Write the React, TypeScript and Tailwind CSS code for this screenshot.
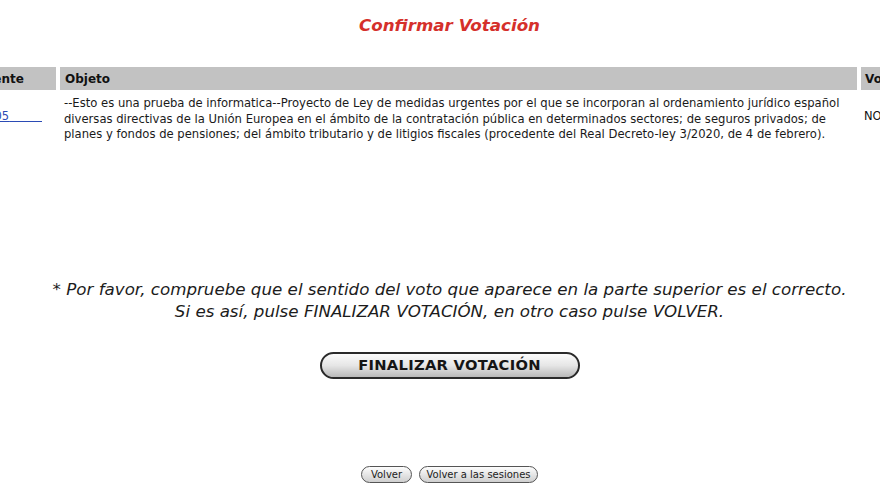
import React from "react"

const font = { fontFamily: '"DejaVu Sans", Verdana, sans-serif' }

export default function App() {
  return (
    <div
      className="w-[880px] h-[495px] overflow-hidden bg-white text-[#111] flex flex-col"
      style={font}
    >
      <h1 className="pt-[14px] pl-[19px] text-center text-[16.7px] leading-[22px] font-bold italic text-[#d5302b]">
        Confirmar Votación
      </h1>

      {/* tabla de la votación, recortada por los lados */}
      <div className="mt-[31px] -ml-[57px] flex gap-[4px]">
        <div className="w-[113px] shrink-0 flex flex-col">
          <div className="h-[23px] bg-[#c2c2c2] px-[5px] flex items-center text-[12px] font-bold whitespace-nowrap">
            Expediente
          </div>
          <div className="h-[54px] pr-[14px] flex items-center justify-end text-[11.5px]">
            <a href="#" className="text-[#2b4bb5] underline whitespace-pre">
              121/000005{"\u00a0\u00a0\u00a0\u00a0\u00a0\u00a0\u00a0\u00a0\u00a0"}
            </a>
          </div>
        </div>

        <div className="w-[797px] shrink-0 flex flex-col">
          <div className="h-[23px] bg-[#c2c2c2] px-[5px] flex items-center text-[12px] font-bold">
            Objeto
          </div>
          <div className="pt-[6px] px-[4px] text-[11.6px] leading-[15.5px] text-[#1a1a1a]">
            --Esto es una prueba de informatica--Proyecto de Ley de medidas urgentes por el que se incorporan al
            ordenamiento jurídico español diversas directivas de la Unión Europea en el ámbito de la contratación
            pública en determinados sectores; de seguros privados; de planes y fondos de pensiones; del ámbito
            tributario y de litigios fiscales (procedente del Real Decreto-ley 3/2020, de 4 de febrero).
          </div>
        </div>

        <div className="w-[80px] shrink-0 flex flex-col">
          <div className="h-[23px] bg-[#c2c2c2] px-[4px] flex items-center text-[12px] font-bold">
            Voto
          </div>
          <div className="h-[54px] px-[3px] flex items-center text-[11.5px]">NO</div>
        </div>
      </div>

      <div className="mt-[134px] pl-[19px] text-center text-[16.7px] leading-[22px] italic text-[#1c1c1c]">
        <p className="whitespace-nowrap">
          * Por favor, compruebe que el sentido del voto que aparece en la parte superior es el correcto.
        </p>
        <p>Si es así, pulse FINALIZAR VOTACIÓN, en otro caso pulse VOLVER.</p>
      </div>

      <div className="mt-[30px] pl-[19px] flex justify-center">
        <button className="w-[260px] h-[27px] rounded-full border-2 border-[#2a2a2a] bg-gradient-to-b from-[#fbfbfb] via-[#e6e6e6] to-[#b9b9b9] text-[14.7px] font-bold tracking-[0.3px] text-[#151515]">
          FINALIZAR VOTACIÓN
        </button>
      </div>

      <div className="mt-[87px] pl-[19px] flex justify-center gap-[7px]">
        <button className="w-[51px] h-[17px] rounded-full border border-[#555] bg-gradient-to-b from-[#fdfdfd] to-[#cfcfcf] text-[10px] leading-none text-[#222]">
          Volver
        </button>
        <button className="w-[119px] h-[17px] rounded-full border border-[#555] bg-gradient-to-b from-[#fdfdfd] to-[#cfcfcf] text-[10px] leading-none text-[#222]">
          Volver a las sesiones
        </button>
      </div>
    </div>
  )
}
